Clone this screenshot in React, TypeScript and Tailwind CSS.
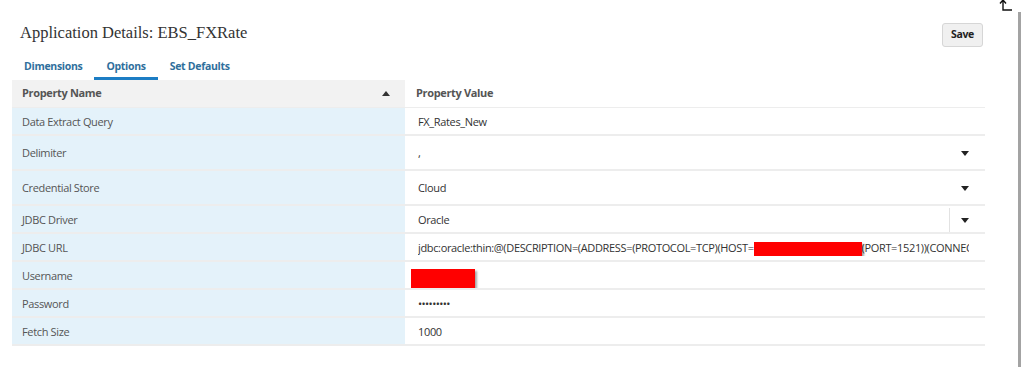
import React from "react";

type Row = {
  label: string;
  value: React.ReactNode;
  select?: "plain" | "split";
  tall?: boolean;
  valuePad?: string;
};

function Caret() {
  return (
    <svg viewBox="0 0 8 5" className="h-[5px] w-[8px]" aria-hidden="true">
      <path d="M0 0 H8 L4 5 Z" fill="#222" />
    </svg>
  );
}

function Redacted({ className }: { className: string }) {
  return (
    <span
      className={`inline-block bg-[#ff0000] align-middle shadow-[2px_2px_2px_rgba(0,0,0,0.35)] ${className}`}
    />
  );
}

const rows: Row[] = [
  { label: "Data Extract Query", value: "FX_Rates_New" },
  { label: "Delimiter", value: ",", select: "plain", tall: true },
  { label: "Credential Store", value: "Cloud", select: "plain", tall: true },
  { label: "JDBC Driver", value: "Oracle", select: "split" },
  {
    label: "JDBC URL",
    value: (
      <span className="whitespace-nowrap">
        jdbc:oracle:thin:@(DESCRIPTION=(ADDRESS=(PROTOCOL=TCP)(HOST=
        <Redacted className="h-[14px] w-[108px]" />
        (PORT=1521))(CONNECT_DATA=(SERVICE_NAME=EBSPROD)))
      </span>
    ),
  },
  {
    label: "Username",
    value: <Redacted className="mt-[4px] h-[19px] w-[64px]" />,
    valuePad: "pl-[6px]",
  },
  {
    label: "Password",
    value: <span className="text-[11px] tracking-[-0.6px] text-[#333]">•••••••••</span>,
  },
  { label: "Fetch Size", value: "1000" },
];

export default function App() {
  return (
    <div className="flex h-[367px] w-[1024px] overflow-hidden bg-white font-['Open_Sans',sans-serif] text-[11px] tracking-[-0.35px] text-[#333]">
      <div className="w-[985px] pl-[12px]">
        {/* Title + Save */}
        <div className="flex items-start justify-between pt-[22px]">
          <h1 className="pl-[8px] font-['Liberation_Serif',serif] text-[16.5px] leading-[21px] tracking-normal text-[#333]">
            Application Details: EBS_FXRate
          </h1>
          <button
            type="button"
            className="mr-[2px] mt-[1px] h-[24px] w-[41px] rounded-[3px] border border-[#d6d6d6] bg-[#f0f0f0] text-[10.5px] font-bold text-[#222]"
          >
            Save
          </button>
        </div>

        {/* Tabs */}
        <div className="mt-[5px] flex h-[28px] items-stretch">
          {["Dimensions", "Options", "Set Defaults"].map((t) => (
            <div
              key={t}
              className={`flex items-center border-b-[3px] px-[12px] pt-[4px] text-[10.5px] font-bold tracking-[-0.3px] text-[#2f6f9c] ${
                t === "Options" ? "border-[#1c7dc4]" : "border-transparent"
              }`}
            >
              {t}
            </div>
          ))}
        </div>

        {/* Table */}
        <div className="w-[973px]">
          <div className="flex h-[28px] border-b border-black/[0.07] font-bold text-[#555]">
            <div className="flex w-[393px] items-center justify-between bg-[#f2f2f2] pl-[10px] pr-[15px]">
              <span>Property Name</span>
              <svg viewBox="0 0 8 5" className="h-[5px] w-[8px]" aria-hidden="true">
                <path d="M0 5 H8 L4 0 Z" fill="#333" />
              </svg>
            </div>
            <div className="flex flex-1 items-center pl-[11px]">Property Value</div>
          </div>

          {rows.map((r) => (
            <div
              key={r.label}
              className={`flex border-b-2 border-black/[0.07] ${r.tall ? "h-[35px]" : "h-[28px]"}`}
            >
              <div className="flex w-[393px] items-center bg-[#e4f2fa] pl-[10px] pt-[2px] text-[#555]">
                {r.label}
              </div>
              <div
                className={`flex min-w-0 flex-1 items-center pr-[16px] pt-[2px] ${r.valuePad ?? "pl-[13px]"}`}
              >
                <div className="min-w-0 flex-1 overflow-hidden">{r.value}</div>
                {r.select === "plain" && <Caret />}
                {r.select === "split" && (
                  <div className="flex h-full items-center border-l border-[#e2e2e2] pl-[11px]">
                    <Caret />
                  </div>
                )}
              </div>
            </div>
          ))}
        </div>
      </div>

      {/* Right edge: corner arrow + scroll rail */}
      <div className="relative ml-[33px] flex w-[6px]">
        <svg
          viewBox="0 0 14 12"
          className="absolute -left-[19px] -top-[1px] h-[12px] w-[14px]"
          aria-hidden="true"
        >
          <path d="M4 1 V11 H13" fill="none" stroke="#111" strokeWidth="1.4" />
          <path d="M1 4.5 L4 1 L7 4.5" fill="none" stroke="#111" strokeWidth="1.4" />
        </svg>
        <div className="mt-[12px] w-[3px] bg-[#a3a3a3]" />
      </div>
    </div>
  );
}
